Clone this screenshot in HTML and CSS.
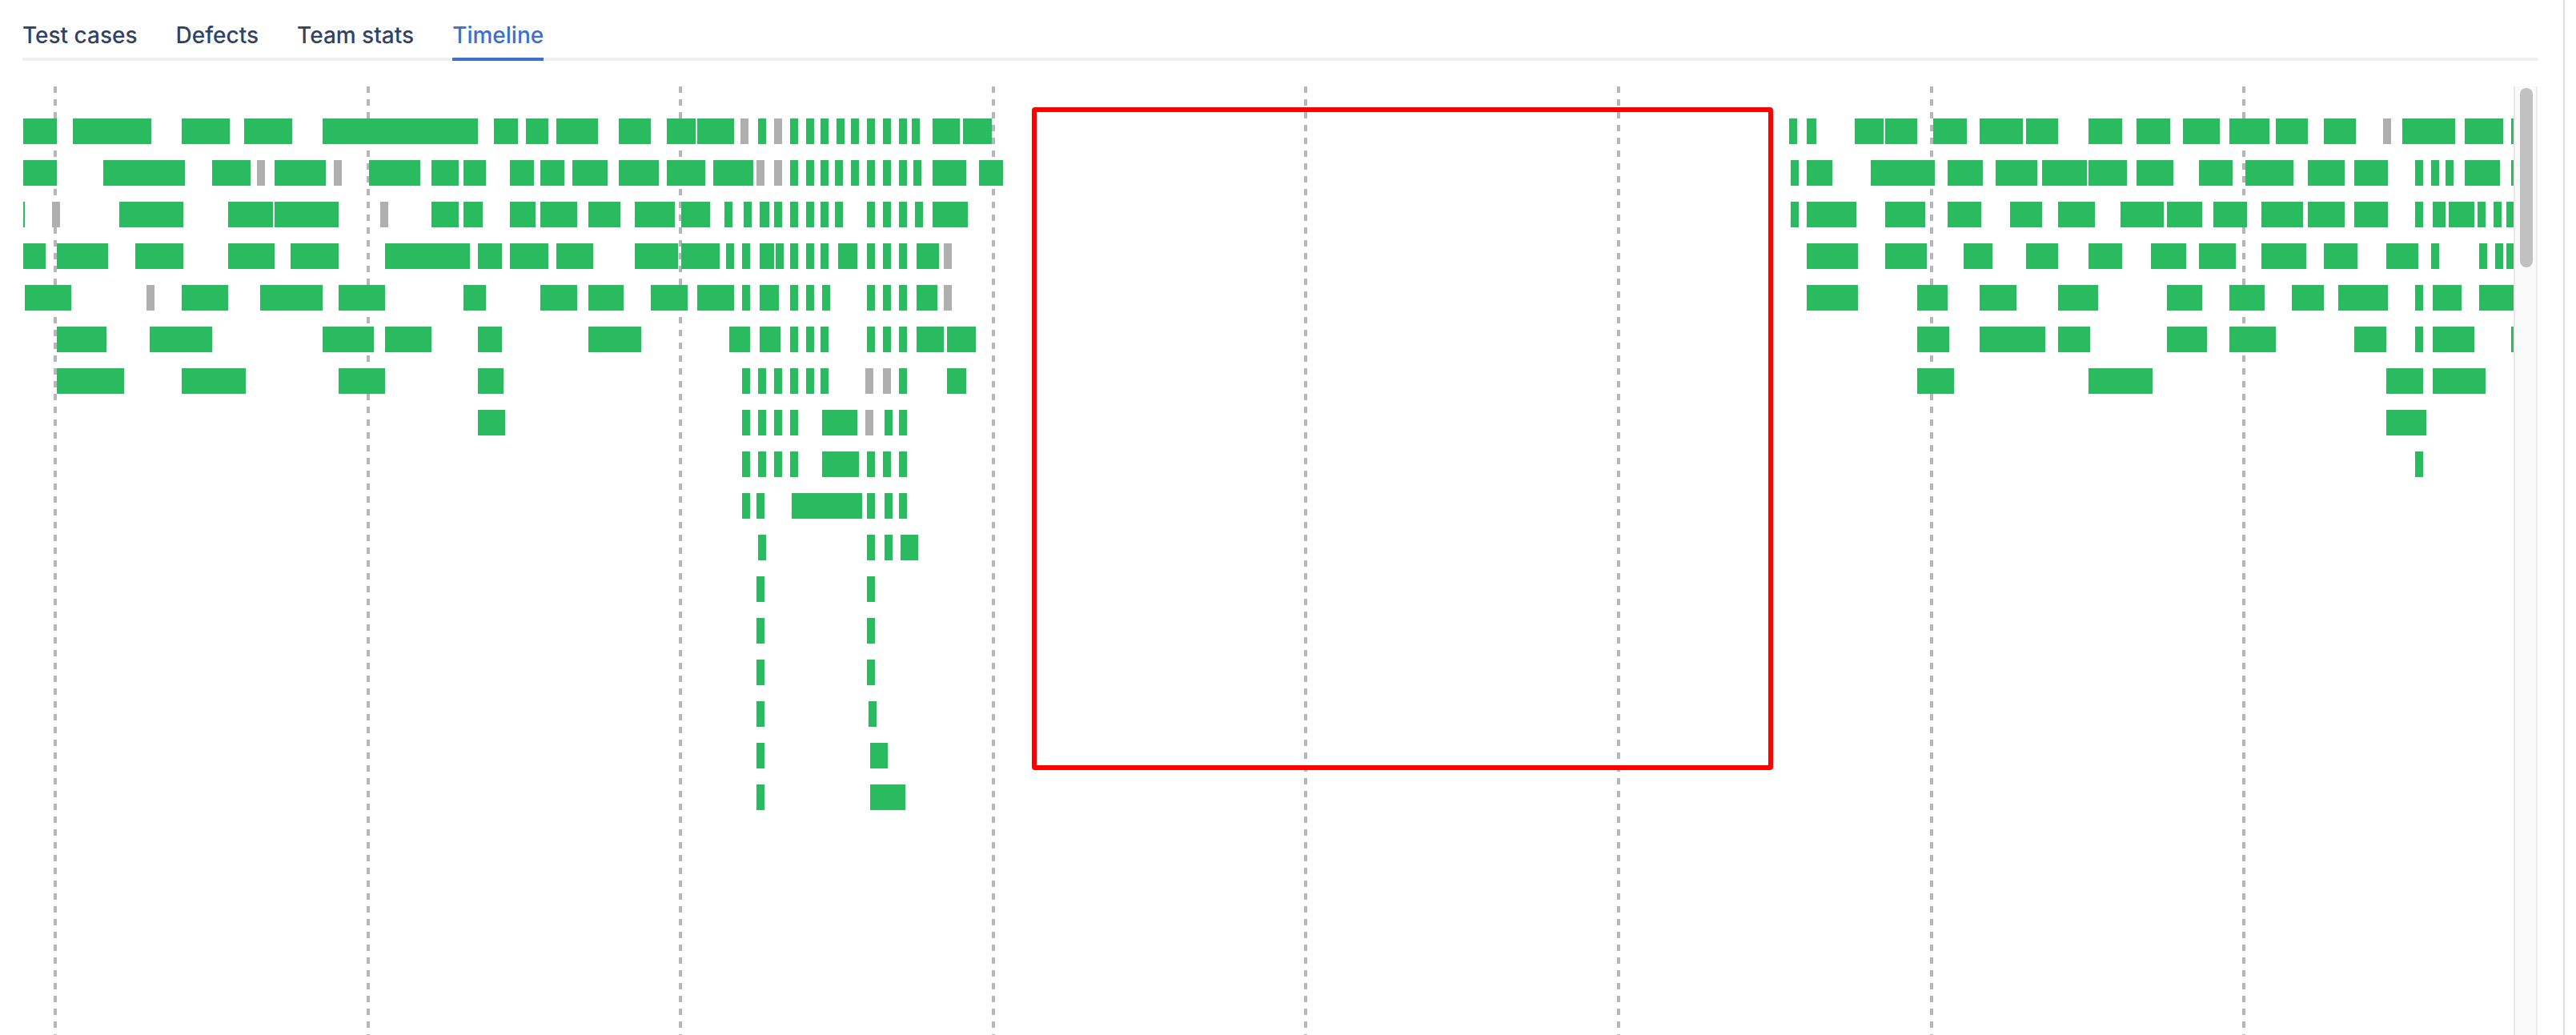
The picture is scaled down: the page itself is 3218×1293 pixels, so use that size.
FILE: index.html
```html
<!DOCTYPE html>
<html lang="en">
<head>
<meta charset="utf-8">
<meta name="viewport" content="width=device-width, initial-scale=1">
<title>Timeline</title>
<link rel="stylesheet" href="styles.css">
</head>
<body>
<main class="panel">
  <nav class="tabs">
    <a class="tab" href="#cases">Test cases</a>
    <a class="tab" href="#defects">Defects</a>
    <a class="tab" href="#team">Team stats</a>
    <a class="tab tab-active" href="#timeline" aria-current="page">Timeline</a>
  </nav>
  <section class="timeline">
    <svg class="chart" id="chart" role="img" aria-label="Test runs over time"></svg>
    <div class="scroll-track"><div class="scroll-thumb"></div></div>
    <div class="selection"></div>
  </section>
</main>
<script src="timeline.js"></script>
</body>
</html>
```
FILE: styles.css
```css
* {
  box-sizing: border-box;
}

body {
  margin: 0;
  background: #fff;
  font-family: Inter, "Liberation Sans", sans-serif;
}

.panel {
  display: flex;
  flex-direction: column;
  height: 100vh;
  margin-right: 14px;
  padding: 0 32px 0 28px;
  border-right: 2px solid #e0e0e6;
}

.tabs {
  display: flex;
  gap: 48px;
  height: 76px;
  border-bottom: 4px solid #efefef;
}

.tab {
  height: 76px;
  padding-top: 24px;
  border-bottom: 4px solid transparent;
  color: #33435f;
  font-size: 28px;
  font-weight: 500;
  line-height: 40px;
  white-space: nowrap;
  text-decoration: none;
}

.tab-active {
  border-bottom-color: #3d6fcc;
  color: #3d6fcc;
}

.timeline {
  position: relative;
  display: flex;
  flex: 1;
  min-height: 0;
  margin-top: 32px;
}

.chart {
  flex: 1;
  min-width: 0;
  height: 100%;
  overflow: hidden;
}

.gridline {
  stroke: #b3b6bc;
  stroke-width: 4px;
  stroke-dasharray: 8 8;
}

.passed {
  fill: #2aba5f;
}

.skipped {
  fill: #afafaf;
}

.scroll-track {
  width: 30px;
  padding: 2px 4px 2px 6px;
  border-left: 2px solid #e7e7e7;
  border-right: 2px solid #ededed;
  background: #fafafa;
}

.scroll-thumb {
  width: 16px;
  height: 224px;
  border-radius: 8px;
  background: #c1c1c1;
}

/* Highlighted time span, drawn over the chart */
.selection {
  position: absolute;
  top: 26px;
  left: 1261px;
  width: 926px;
  height: 828px;
  border: 6px solid #f00;
  border-radius: 4px;
}
```
FILE: timeline.js
```js
const NS = "http://www.w3.org/2000/svg";
const chart = document.getElementById("chart");

const ORIGIN = 28;
const MIN_WIDTH = 10;
const BAR_HEIGHT = 32;
const ROW_STEP = 52;
const FIRST_ROW = 40;

const gridlines = [41, 432, 822, 1213, 1603, 1994, 2385, 2775];

// One string per lane: "start-end", or "start" for the shortest runs; "s" marks a skipped run.
const lanes = [
  "29-71 91-189 227-287 305-365 403-597 617-647 657-685 695-747 773-813 833-869 871-917 s925 947 s967 987 1007 1025 1045 1063 1083 1103 1123 1139 1165-1199 1203-1239 2235 2257-2269 2317-2353 2355-2395 2415-2457 2473-2527 2531-2571 2609-2651 2669-2711 2727-2773 2785-2835 2843-2883 2903-2943 s2977 3001-3067 3079-3127 3137",
  "29-71 129-231 265-313 s321 343-407 s417 461-525 539-573 579-607 637-667 675-705 715-759 773-823 833-881 891-941 s945 s967 987 1007 1025 1043 1063 1083 1103 1123 1141 1165-1207 1223-1253 2237 2257-2289 2337-2417 2433-2477 2493-2545 2551-2607 2609-2657 2669-2715 2747-2789 2805-2865 2883-2929 2941-2983 3017 3037 3055 3079-3123 3137",
  "29-31 s65 149-229 285-341 343-423 s475 539-573 579-603 637-669 675-721 735-775 793-843 851-887 905 929 949-961 967 987 1007 1025 1043 1083 1103 1123 1143 1165-1209 2237 2257-2319 2355-2405 2433-2475 2511-2551 2571-2617 2649-2703 2707-2751 2765-2807 2825-2877 2883-2929 2941-2983 3017 3039-3055 3059-3091 3095 3115 3131",
  "29-57 71-135 169-229 285-343 363-423 481-587 597-627 637-685 695-741 793-847 851-899 907 927 949-967 969 987 1007 1025 1047-1071 1083 1103 1123 1145-1173 s1179 2257-2321 2355-2407 2453-2489 2531-2571 2609-2651 2687-2731 2747-2793 2825-2881 2903-2945 2981-3021 3037 3097 3117 3131",
  "31-89 s183 227-285 325-403 423-481 579-607 675-721 735-779 813-859 871-917 927 949-973 987 1007 1027 1083 1103 1123 1145-1171 s1179 2257-2321 2395-2433 2473-2519 2571-2621 2707-2751 2785-2829 2863-2903 2921-2983 3017 3039-3075 3097-3150",
  "71-133 187-265 403-467 481-539 597-627 735-801 911-937 949-975 987 1007 1025 1083 1103 1123 1145-1179 1183-1219 2395-2435 2473-2555 2571-2611 2707-2757 2785-2843 2941-2981 3017 3039-3091 3137",
  "71-155 227-307 423-481 597-629 927 947 967 987 1007 1025 s1081 s1103 1123 1183-1207 2395-2441 2609-2689 2981-3027 3039-3105",
  "597-631 927 947 967 987 1027-1071 s1081 1105 1123 2981-3031",
  "927 947 967 987 1027-1073 1083 1103 1123 3017",
  "927 945 989-1077 1083 1105 1123",
  "947 1083 1105 1125-1147",
  "945 1083",
  "945 1083",
  "945 1083",
  "945 1085",
  "945 1087-1109",
  "945 1087-1131"
];

function add(name, attributes) {
  const node = document.createElementNS(NS, name);
  for (const key in attributes) node.setAttribute(key, attributes[key]);
  chart.appendChild(node);
}

gridlines.forEach(x => {
  add("line", { class: "gridline", x1: x, x2: x, y1: 0, y2: "100%" });
});

lanes.forEach((lane, row) => {
  lane.split(" ").forEach(run => {
    const skipped = run[0] === "s";
    const [start, end] = run.replace("s", "").split("-").map(Number);
    add("rect", {
      class: skipped ? "skipped" : "passed",
      x: start - ORIGIN,
      y: FIRST_ROW + row * ROW_STEP,
      width: end ? end - start : MIN_WIDTH,
      height: BAR_HEIGHT
    });
  });
});
```
